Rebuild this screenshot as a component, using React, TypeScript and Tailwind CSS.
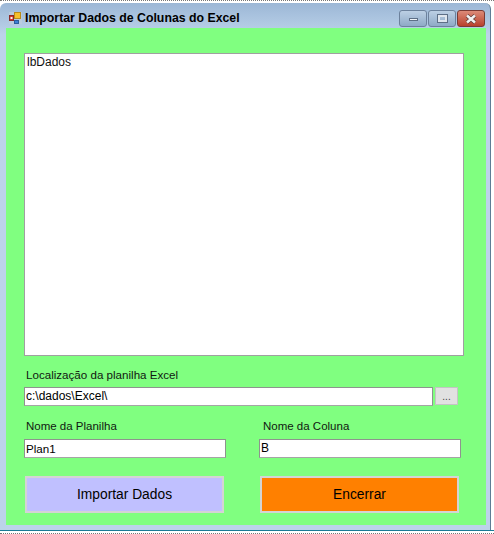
import React from 'react';

const font = { fontFamily: '"Liberation Sans", Arial, sans-serif' };

function TitleIcon() {
  return (
    <svg width="16" height="16" viewBox="0 0 16 16" className="shrink-0 mt-[3px]">
      <rect x="1" y="2" width="13" height="12" fill="#c3cfdc" opacity="0.6" />
      <rect x="1.5" y="5.5" width="4" height="5" fill="#d8352a" stroke="#8a2a2a" />
      <rect x="2.5" y="7" width="2" height="2" fill="#f4f4f4" />
      <rect x="6.5" y="2.5" width="6" height="6" fill="#f5c02c" stroke="#b98a1a" />
      <rect x="6.5" y="10.5" width="4" height="3" fill="#3d7fd6" stroke="#2c5d9c" />
    </svg>
  );
}

function CaptionButtons() {
  return (
    <div className="flex gap-[1px] h-[17px] mt-[3px]">
      <div className="w-[28px] h-[17px] rounded-[3px] border border-[#6c819c] bg-gradient-to-b from-[#bccfe4] to-[#8faac6] flex items-center justify-center">
        <div className="w-[9px] h-[3px] mt-[2px] bg-[#eef2f6] border-[0.5px] border-[#5d6f86]" />
      </div>
      <div className="w-[28px] h-[17px] rounded-[3px] border border-[#6c819c] bg-gradient-to-b from-[#bccfe4] to-[#8faac6] flex items-center justify-center">
        <div className="w-[9px] h-[7px] border-2 border-[#dfe6ee] outline outline-1 outline-[#5d6f86]" />
      </div>
      <div className="w-[28px] h-[17px] rounded-[3px] border border-[#7a3a34] bg-gradient-to-b from-[#dc8a78] to-[#b8402c] flex items-center justify-center">
        <svg width="12" height="10" viewBox="0 0 12 10">
          <path d="M2 1.5 L10 8.5 M10 1.5 L2 8.5" stroke="#5d3a36" strokeWidth="4" />
          <path d="M2 1.5 L10 8.5 M10 1.5 L2 8.5" stroke="#f2f2f2" strokeWidth="2.5" />
        </svg>
      </div>
    </div>
  );
}

function TextInput({ value, className }: { value: string; className: string }) {
  return (
    <div className={`h-[19px] bg-white border border-[#8e948e] border-b-[#a5a5a5] pl-[1px] leading-[17px] text-black ${className}`}>
      {value}
    </div>
  );
}

export default function App() {
  return (
    <div className="w-[494px] h-[534px] bg-white overflow-hidden" style={font}>
      <div className="h-[3px] border-t border-dotted border-[#777]" />
      <div className="w-[491px] h-[527px] rounded-t-[6px] border-r border-[#5d7d96] bg-gradient-to-b from-[#9cb7d6] via-[#bcd3ea] via-[6%] to-[#bcd3ea] flex flex-col">
        <div className="h-[25px] flex items-start pl-[8px] pr-[5px] pt-[4px]">
          <TitleIcon />
          <div className="ml-[1px] flex-1 text-[12.3px] leading-[22px] font-bold text-black">Importar Dados de Colunas do Excel</div>
          <CaptionButtons />
        </div>
        <div className="ml-[6px] w-[480px] h-[497px] bg-[#80ff80] pt-[25px] pl-[18px]">
          <div className="w-[440px] h-[303px] bg-white border border-[#a0a0a0] pl-[2px] pt-[1px] text-[12px] leading-[14px] text-[#111]">
            lbDados
          </div>
          <div className="mt-[12px] pl-[2px] text-[11.6px] leading-[14px] text-[#101810]">Localização da planilha Excel</div>
          <div className="mt-[5px] flex gap-[2px]">
            <TextInput value="c:\dados\Excel\" className="w-[409px] text-[12px]" />
            <div className="w-[23px] h-[18px] bg-[#e1e1e1] border border-[#c4c4c4] text-[10px] leading-[18px] text-center text-[#444]">...</div>
          </div>
          <div className="mt-[13px] flex">
            <div className="w-[235px] pl-[2px] text-[11.5px] leading-[14px] text-[#101810]">Nome da Planilha</div>
            <div className="pl-[4px] text-[11.5px] leading-[14px] text-[#101810]">Nome da Coluna</div>
          </div>
          <div className="mt-[6px] flex gap-[33px]">
            <TextInput value="Plan1" className="w-[202px] text-[11.6px]" />
            <TextInput value="B" className="w-[202px] text-[12px]" />
          </div>
          <div className="mt-[18px] flex gap-[36px] pl-[1px]">
            <div className="w-[199px] h-[37px] pt-[1px] bg-[#c0c0ff] border-2 border-[#d4d4d4] flex items-center justify-center text-[13.8px] text-black">Importar Dados</div>
            <div className="w-[199px] h-[37px] pt-[1px] bg-[#ff8000] border-2 border-[#d4d4d4] flex items-center justify-center text-[13.8px] text-black">Encerrar</div>
          </div>
        </div>
      </div>
      <div className="h-[1px] bg-[#1a7a96]" />
      <div className="h-[3px] border-b border-dotted border-[#777]" />
    </div>
  );
}
